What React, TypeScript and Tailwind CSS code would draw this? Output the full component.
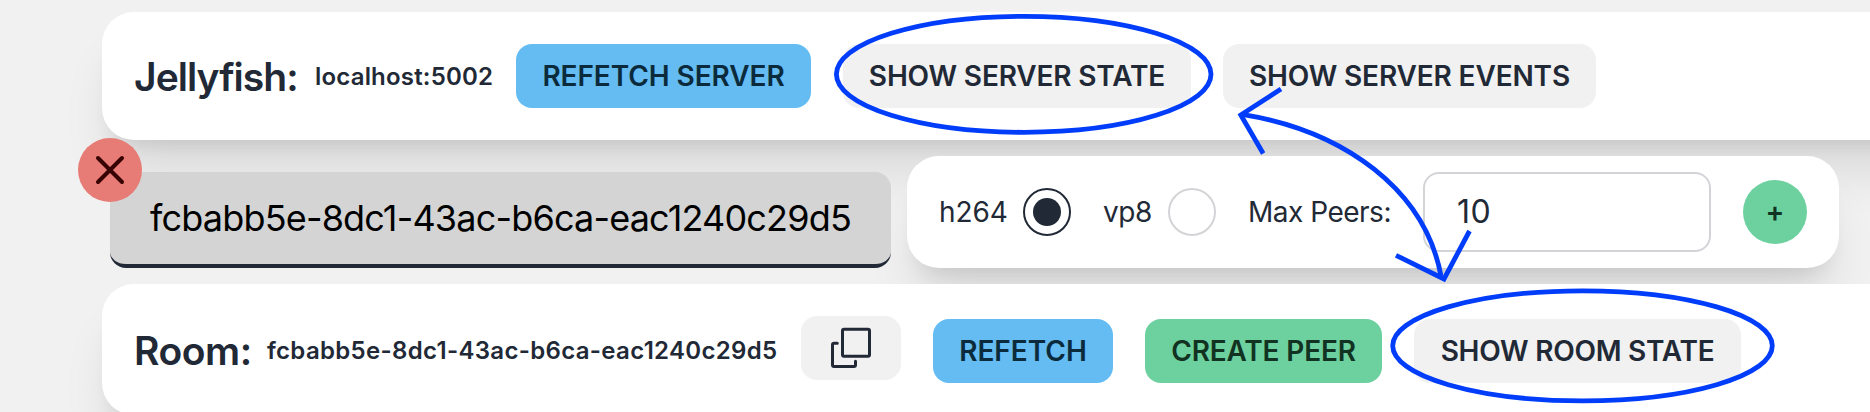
import type { ReactNode } from "react";

const ROOM_ID = "fcbabb5e-8dc1-43ac-b6ca-eac1240c29d5";

const cardShadow = "shadow-[0_40px_50px_-10px_rgba(0,0,0,0.1),0_16px_20px_-12px_rgba(0,0,0,0.1)]";

function Button({ className, children }: { className: string; children: ReactNode }) {
  return (
    <button
      className={`flex h-16 shrink-0 items-center justify-center rounded-2xl text-[28px] leading-none font-semibold whitespace-nowrap ${className}`}
    >
      {children}
    </button>
  );
}

function CopyIcon() {
  return (
    <svg className="h-12 w-12" viewBox="0 0 48 48" fill="none" stroke="currentColor" strokeWidth="3" strokeLinecap="round" strokeLinejoin="round">
      <rect x="15.5" y="5.3" width="27" height="27" rx="1.5" />
      <path d="M10.3 19.2H7a1.5 1.5 0 0 0-1.5 1.5V41a1.5 1.5 0 0 0 1.5 1.5h20a1.5 1.5 0 0 0 1.5-1.5v-3.7" />
    </svg>
  );
}

function ServerPanel() {
  return (
    <section className={`ml-[102px] flex h-32 w-[1860px] shrink-0 items-center rounded-[32px] bg-white pl-8 ${cardShadow}`}>
      <h1 className="w-[181px] shrink-0 text-[39px] leading-none font-semibold tracking-[-0.95px] whitespace-nowrap">Jellyfish:</h1>
      <span className="w-[201px] shrink-0 pt-px text-2xl leading-none font-semibold tracking-[0.19px] whitespace-nowrap">localhost:5002</span>
      <div className="flex gap-8">
        <Button className="w-[295px] bg-[#64bcf3] tracking-[-0.08px] text-[#0b2b3c]">REFETCH SERVER</Button>
        <Button className="w-[348px] bg-[#f1f1f1] tracking-[-0.155px]">SHOW SERVER STATE</Button>
        <Button className="w-[373px] bg-[#f1f1f1] tracking-[-0.14px]">SHOW SERVER EVENTS</Button>
      </div>
    </section>
  );
}

function RoomTab() {
  return (
    <div className="relative flex h-24 w-[781px] shrink-0 items-center rounded-2xl border-b-4 border-[#222936] bg-[#d4d4d4] pl-10 text-4xl leading-none tracking-[-0.815px] whitespace-nowrap text-black">
      {ROOM_ID}
      <button className="absolute -top-[34px] -left-8 flex h-16 w-16 items-center justify-center rounded-full bg-[#e77b76] text-[#380403]">
        <svg className="h-8 w-8" viewBox="0 0 32 32" fill="none" stroke="currentColor" strokeWidth="4" strokeLinecap="round">
          <path d="M4 4 28 28M28 4 4 28" />
        </svg>
      </button>
    </div>
  );
}

function Radio({ checked }: { checked: boolean }) {
  return (
    <span
      className={`flex h-12 w-12 shrink-0 items-center justify-center rounded-full border-2 ${checked ? "border-[#222936]" : "border-[#d3d4d7]"}`}
    >
      {checked && <span className="h-7 w-7 rounded-full bg-[#222936]" />}
    </span>
  );
}

function RoomForm() {
  return (
    <form className={`flex h-28 w-[932px] shrink-0 items-center rounded-[32px] bg-white pl-8 text-[28px] leading-none whitespace-nowrap ${cardShadow}`}>
      <label className="flex items-center">
        <span className="w-[84px] tracking-[-0.1px]">h264</span>
        <Radio checked />
      </label>
      <label className="ml-8 flex items-center">
        <span className="w-[65px] tracking-[-0.5px]">vp8</span>
        <Radio checked={false} />
      </label>
      <label className="ml-8 flex items-center">
        <span className="w-[175px] tracking-[-0.5px]">Max Peers:</span>
        <span className="flex h-20 w-72 items-center rounded-2xl border-2 border-[#d3d4d7] pl-8 text-[32px] tracking-[0.4px]">10</span>
      </label>
      <Button className="ml-8 w-16 rounded-full bg-[#6dd19f] text-[#123322]">+</Button>
    </form>
  );
}

function RoomPanel() {
  return (
    <section className={`ml-[102px] flex h-[131px] w-[1860px] shrink-0 items-start rounded-[32px] bg-white py-8 pl-8 ${cardShadow}`}>
      <h2 className="mt-[15px] w-[133px] shrink-0 text-[39px] leading-[39px] font-semibold tracking-[-0.45px] whitespace-nowrap">Room:</h2>
      <span className="mt-[23px] w-[534px] shrink-0 text-2xl leading-6 font-semibold tracking-[0.32px] whitespace-nowrap">{ROOM_ID}</span>
      <Button className="w-[100px] bg-[#f1f1f1]">
        <CopyIcon />
      </Button>
      <div className="mt-[3px] ml-8 flex gap-8">
        <Button className="w-[180px] bg-[#64bcf3] text-[#0b2b3c]">REFETCH</Button>
        <Button className="w-[237px] bg-[#6dd19f] tracking-[-0.17px] text-[#123322]">CREATE PEER</Button>
        <Button className="w-[327px] bg-[#f1f1f1] tracking-[-0.26px]">SHOW ROOM STATE</Button>
      </div>
    </section>
  );
}

function Annotations() {
  return (
    <svg className="pointer-events-none absolute inset-0" width="1870" height="412" viewBox="0 0 1870 412" fill="none" stroke="#003dfb" strokeWidth="4.8">
      <ellipse cx="1023.7" cy="74.3" rx="187.3" ry="58" />
      <ellipse cx="1582.5" cy="345.8" rx="189.8" ry="55" />
      <path d="M1242 114.3C1345 131 1425 190 1441 276" />
      <path d="M1281 89 1240.8 115 1263.2 153.5" />
      <path d="M1396 255.3 1444 279 1469.5 231" />
    </svg>
  );
}

export default function App() {
  return (
    <div className="relative flex h-[412px] w-full flex-col gap-4 overflow-hidden bg-[#f1f1f1] pt-3 font-['Inter',sans-serif] text-[#222936]">
      <ServerPanel />
      <div className="ml-[110px] flex shrink-0 items-end gap-4">
        <RoomTab />
        <RoomForm />
      </div>
      <RoomPanel />
      <Annotations />
    </div>
  );
}
